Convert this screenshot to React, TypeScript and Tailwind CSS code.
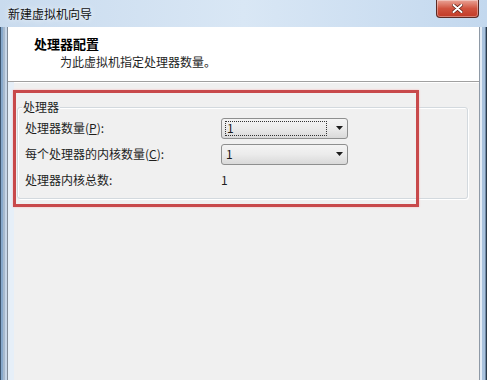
const font = { fontFamily: '"Noto Sans CJK SC", "Noto Sans", sans-serif' };

function ComboBox({ value, focused }: { value: string; focused?: boolean }) {
  return (
    <div className="relative flex h-[21px] w-[127px] items-center rounded-[3px] border border-[#8e8f8f] bg-gradient-to-b from-[#f4f4f4] via-[#ebebeb] to-[#d9d9d9] pl-[3px] pr-[4px]">
      <div
        className={`flex h-[15px] flex-1 items-center pl-[1px] text-[12px] leading-none text-[#1a1a1a] ${
          focused ? "border border-dotted border-[#333]" : ""
        }`}
      >
        {value}
      </div>
      <div className="flex w-[16px] justify-end">
        <svg width="7" height="4" viewBox="0 0 7 4">
          <path d="M0 0h7L3.5 4z" fill="#1c1c1c" />
        </svg>
      </div>
    </div>
  );
}

function Row({ label, children }: { label: React.ReactNode; children: React.ReactNode }) {
  return (
    <div className="flex h-[26px] items-center">
      <div className="w-[196px] text-[12px] text-[#1e1e1e]">{label}</div>
      {children}
    </div>
  );
}

export default function App() {
  return (
    <div
      className="relative flex h-[380px] w-[487px] flex-col overflow-hidden bg-gradient-to-b from-[#c4d7ec] to-[#b6cde6]"
      style={font}
    >
      {/* title bar */}
      <div className="relative flex h-[27px] items-center bg-gradient-to-r from-[#c9dbee] via-[#d9e7f5] to-[#c3d8ee] pl-[8px]">
        <span className="text-[12px] text-[#111] [text-shadow:0_0_6px_#ffffff]">新建虚拟机向导</span>
        <div className="absolute right-[8px] top-0 flex h-[18px] w-[43px] items-center justify-center rounded-b-[4px] border border-t-0 border-[#5b2a24] bg-gradient-to-b from-[#e9a397] via-[#d0533f] to-[#c13a26] shadow-[inset_0_0_0_1px_rgba(255,255,255,0.35)]">
          <svg width="11" height="9" viewBox="0 0 11 9">
            <path d="M1.5 1l8 7M9.5 1l-8 7" stroke="#5a1a10" strokeWidth="3.4" strokeLinecap="round" />
            <path d="M1.5 1l8 7M9.5 1l-8 7" stroke="#ffffff" strokeWidth="2" strokeLinecap="round" />
          </svg>
        </div>
      </div>

      <div className="flex flex-1">
        {/* left frame */}
        <div className="flex w-[8px]">
          <div className="w-[1px] bg-[#3e5670]" />
          <div className="w-[2px] bg-[#87a9cc]" />
          <div className="w-[2px] bg-[#a7b9cd]" />
          <div className="w-[2px] bg-[#c6d6e8]" />
          <div className="w-[1px] bg-[#7f8a97]" />
        </div>

        {/* client */}
        <div className="flex flex-1 flex-col border-r border-[#8e99a6] bg-[#f0f0f0]">
          <div className="h-[55px] border-b border-[#a0a0a0] bg-white pl-[26px] pt-[8px] shadow-[0_1px_0_#ffffff]">
            <div className="text-[13px] font-bold leading-[17px] text-[#000]">处理器配置</div>
            <div className="pl-[26px] pt-[1px] text-[12px] leading-[17px] text-[#1e1e1e]">为此虚拟机指定处理器数量。</div>
          </div>

          <div className="relative flex flex-1 border-l-[6px] border-[#e6eff8] pl-[3px] pt-[25px]">
            {/* highlight annotation */}
            <div className="pointer-events-none absolute left-[-1px] top-[8px] z-10 h-[117px] w-[406px] border-[3px] border-[#c8494b] shadow-[0_0_2px_#f4b8b8]" />

            <div className="relative h-[92px] w-[451px] rounded-[3px] border border-[#d3d9de] pl-[7px] pt-[7px] shadow-[inset_1px_1px_0_#ffffff,1px_1px_0_#ffffff]">
              <span className="absolute left-[4px] top-[-9px] bg-[#f0f0f0] px-[1px] text-[12px] leading-[16px] text-[#1e1e1e]">
                处理器
              </span>
              <Row
                label={
                  <>
                    处理器数量(<span className="underline">P</span>):
                  </>
                }
              >
                <ComboBox value="1" focused />
              </Row>
              <Row
                label={
                  <>
                    每个处理器的内核数量(<span className="underline">C</span>):
                  </>
                }
              >
                <ComboBox value="1" />
              </Row>
              <Row label="处理器内核总数:">
                <span className="text-[12px] text-[#1e1e1e]">1</span>
              </Row>
            </div>
          </div>
        </div>

        {/* right frame */}
        <div className="flex w-[7px]">
          <div className="w-[2px] bg-[#e2ebf5]" />
          <div className="w-[3px] bg-[#a9c2dd]" />
          <div className="w-[1px] bg-[#6f89a6]" />
          <div className="w-[1px] bg-[#2b3a4a]" />
        </div>
      </div>
    </div>
  );
}
